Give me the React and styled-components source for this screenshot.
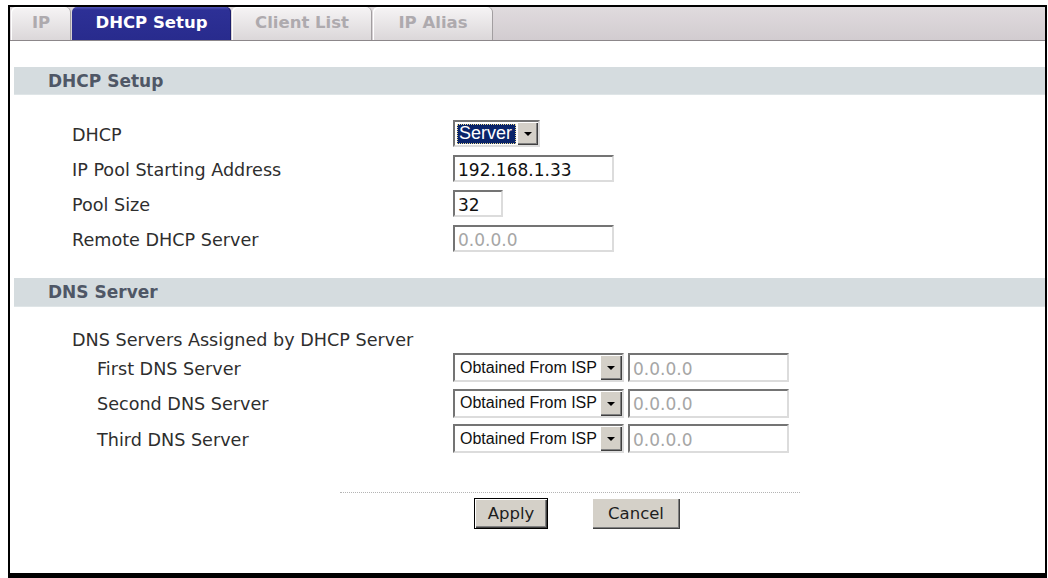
import React from 'react';
import styled, { createGlobalStyle } from 'styled-components';

const Global = createGlobalStyle`
  html, body { margin: 0; padding: 0; background: #fff; }
  body { font-family: "DejaVu Sans", Verdana, sans-serif; }
  * { box-sizing: border-box; }
`;

const Page = styled.div`
  width: 1048px;
  height: 578px;
  overflow: hidden;
  padding-top: 5px;
`;

const Frame = styled.div`
  margin-left: 8px;
  width: 1039px;
  height: 573px;
  border: 2px solid #000;
  border-bottom-width: 5px;
  background: #fff;
  display: flex;
  flex-direction: column;
`;

const TabBar = styled.div`
  height: 34px;
  flex: none;
  display: flex;
  align-items: flex-end;
  gap: 1px;
  padding-left: 1px;
  background: linear-gradient(#e0dbde, #d2ccd0);
  border-bottom: 1px solid #8c878a;
`;

const Tab = styled.div`
  width: ${(p) => p.$w}px;
  height: 33px;
  border-radius: 5px 5px 0 0;
  display: flex;
  align-items: center;
  justify-content: center;
  padding-bottom: 2px;
  font: bold 16.5px "DejaVu Sans", Verdana, sans-serif;
  color: ${(p) => (p.$active ? '#ffffff' : '#aeaaae')};
  background: ${(p) =>
    p.$active
      ? 'linear-gradient(#5356b6 0px, #2d3096 3px, #282b8d 100%)'
      : 'linear-gradient(#f6f4f5, #dbd7d9)'};
  box-shadow: ${(p) =>
    p.$active ? 'inset -1px 0 #1c1e6a' : 'inset -1px 0 #a29ea0, inset 1px 1px #ffffff'};
`;

const Gap = styled.div`
  height: ${(p) => p.$h}px;
  flex: none;
`;

const Band = styled.div`
  margin-left: 4px;
  height: ${(p) => p.$h}px;
  flex: none;
  background: #d5dcdf;
  border-bottom: 1px solid #dfe5e7;
  padding-left: 34px;
  display: flex;
  align-items: center;
  font: bold 17px "DejaVu Sans", Verdana, sans-serif;
  color: #4f5766;
`;

const Section = styled.div`
  padding-top: 21px;
  padding-left: 62px;
  display: flex;
  flex-direction: column;
`;

const Row = styled.div`
  height: ${(p) => p.$h || 35}px;
  display: flex;
  align-items: center;
`;

const Label = styled.div`
  width: ${(p) => (p.$indent ? 356 : 381)}px;
  margin-left: ${(p) => (p.$indent ? 25 : 0)}px;
  padding-top: 2px;
  font-size: 17.6px;
  color: #2e2e2e;
  white-space: nowrap;
`;

const Controls = styled.div`
  display: flex;
  align-items: center;
  gap: 4px;
`;

const Inset = `
  border: 2px solid;
  border-color: #747474 #dcdcdc #dcdcdc #747474;
  background: #fff;
`;

const TextField = styled.input`
  ${Inset}
  width: ${(p) => p.$w}px;
  height: ${(p) => p.$h || 27}px;
  padding: 2px 0 0 3px;
  font: 17px "DejaVu Sans", Verdana, sans-serif;
  color: ${(p) => (p.$muted ? '#a6a6a6' : '#111')};
  outline: none;
`;

const SelectBox = styled.div`
  ${Inset}
  width: ${(p) => p.$w}px;
  height: ${(p) => p.$h}px;
  display: flex;
  align-items: stretch;
`;

const SelectValue = styled.div`
  flex: 1;
  display: flex;
  align-items: center;
  padding-left: ${(p) => (p.$focused ? 2 : 5)}px;
  padding-right: 1px;
  font-family: "Liberation Sans", Arial, sans-serif;
  font-size: ${(p) => p.$fs}px;
  color: #111;
  white-space: nowrap;
`;

const Highlight = styled.span`
  flex: 1;
  height: 20px;
  display: flex;
  align-items: center;
  padding-left: 2px;
  background: #0a246a;
  color: #fff;
  outline: 1px dotted #e8d890;
  outline-offset: -1px;
`;

const DropButton = styled.div`
  width: ${(p) => p.$w}px;
  flex: none;
  background: #d4d0c8;
  box-shadow: inset 1px 1px #ffffff, inset -1px -1px #404040, inset -2px -2px #808080;
  display: flex;
  align-items: center;
  justify-content: center;
`;

const Arrow = styled.span`
  width: 0;
  height: 0;
  border-left: 4px solid transparent;
  border-right: 4px solid transparent;
  border-top: 4px solid #000;
  margin-top: 1px;
`;

const Divider = styled.div`
  margin-left: 330px;
  width: 460px;
  border-top: 1px dotted #b4b4b4;
  flex: none;
`;

const ButtonRow = styled.div`
  margin-left: 464px;
  margin-top: 5px;
  display: flex;
  gap: 44px;
`;

const Button = styled.button`
  width: ${(p) => p.$w}px;
  height: 31px;
  background: #d4d0c8;
  border: ${(p) => (p.$default ? '1px solid #000' : 'none')};
  box-shadow: inset 1px 1px #ffffff, inset -1px -1px #404040, inset -2px -2px #808080;
  font: 16.5px "DejaVu Sans", Verdana, sans-serif;
  color: #1e1e1e;
  padding: 0;
`;

function Select({ value, w, h, fs, bw, focused }) {
  return (
    <SelectBox $w={w} $h={h}>
      <SelectValue $fs={fs} $focused={focused}>
        {focused ? <Highlight>{value}</Highlight> : value}
      </SelectValue>
      <DropButton $w={bw}>
        <Arrow />
      </DropButton>
    </SelectBox>
  );
}

const dnsRows = ['First DNS Server', 'Second DNS Server', 'Third DNS Server'];

export default function App() {
  return (
    <Page>
      <Global />
      <Frame>
        <TabBar>
          <Tab $w={60}>IP</Tab>
          <Tab $w={159} $active>DHCP Setup</Tab>
          <Tab $w={140}>Client List</Tab>
          <Tab $w={120}>IP Alias</Tab>
        </TabBar>
        <Gap $h={26} />
        <Band $h={28}>DHCP Setup</Band>
        <Section>
          <Row>
            <Label>DHCP</Label>
            <Controls>
              <Select value="Server" w={87} h={27} fs={18} bw={21} focused />
            </Controls>
          </Row>
          <Row>
            <Label>IP Pool Starting Address</Label>
            <TextField $w={161} readOnly defaultValue="192.168.1.33" />
          </Row>
          <Row>
            <Label>Pool Size</Label>
            <TextField $w={50} readOnly defaultValue="32" />
          </Row>
          <Row>
            <Label>Remote DHCP Server</Label>
            <TextField $w={161} $muted readOnly defaultValue="0.0.0.0" />
          </Row>
        </Section>
        <Gap $h={22} />
        <Band $h={29}>DNS Server</Band>
        <Section>
          <Row $h={22}>
            <Label>DNS Servers Assigned by DHCP Server</Label>
          </Row>
          {dnsRows.map((name) => (
            <Row key={name} $h={35.5}>
              <Label $indent>{name}</Label>
              <Controls>
                <Select value="Obtained From ISP" w={171} h={29} fs={16} bw={22} />
                <TextField $w={161} $h={29} $muted readOnly defaultValue="0.0.0.0" />
              </Controls>
            </Row>
          ))}
        </Section>
        <Gap $h={35} />
        <Divider />
        <ButtonRow>
          <Button $w={74} $default>Apply</Button>
          <Button $w={88}>Cancel</Button>
        </ButtonRow>
      </Frame>
    </Page>
  );
}
